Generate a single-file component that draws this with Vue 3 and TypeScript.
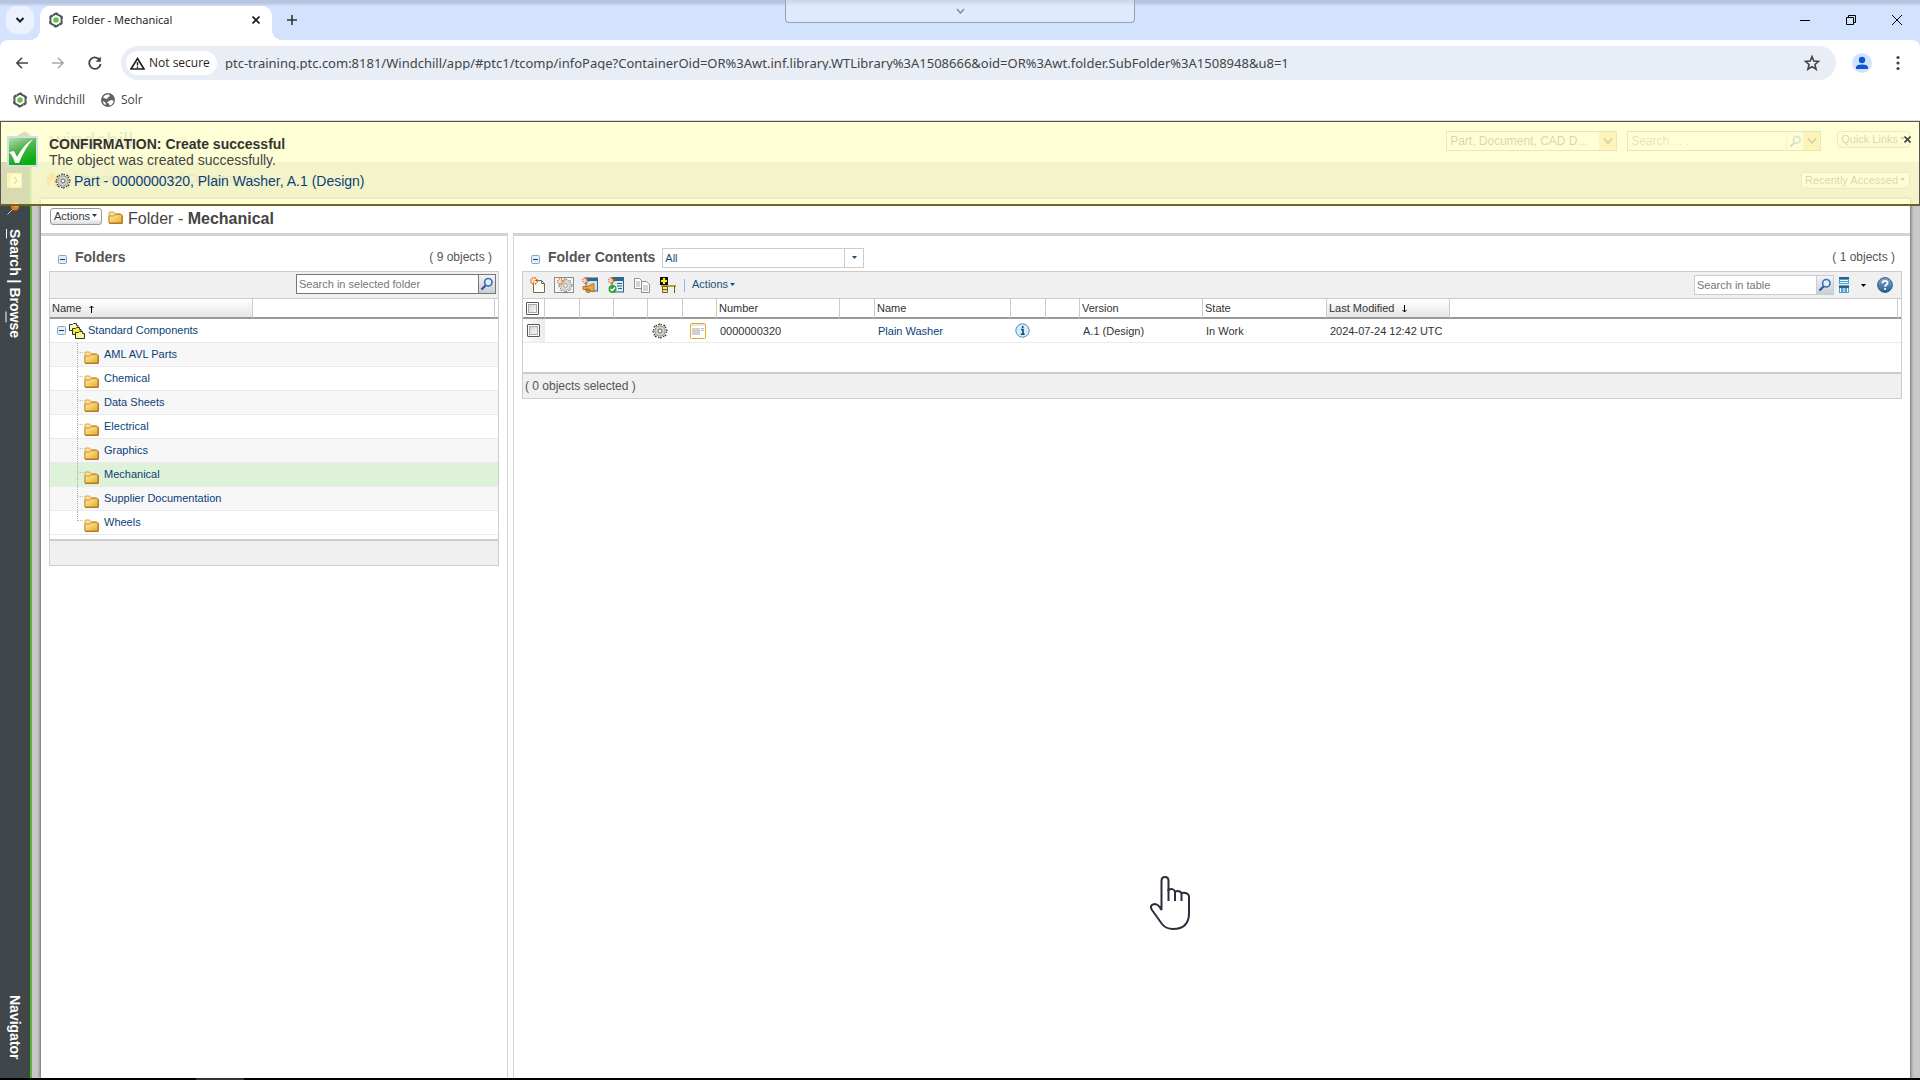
<script setup lang="ts">
import { ref } from 'vue'

const folders: string[] = [
  'AML AVL Parts',
  'Chemical',
  'Data Sheets',
  'Electrical',
  'Graphics',
  'Mechanical',
  'Supplier Documentation',
  'Wheels',
]
const selected = ref('Mechanical')
const columnWidths: number[] = [22, 35, 34, 34, 35, 34, 123, 35, 136, 35, 34, 123, 124, 123]
const petals: number[] = [0, 60, 120, 180, 240, 300]
const teeth: number[] = [0, 45, 90, 135, 180, 225, 270, 315]
const pageUrl =
  'ptc-training.ptc.com:8181/Windchill/app/#ptc1/tcomp/infoPage?ContainerOid=OR%3Awt.inf.library.WTLibrary%3A1508666&oid=OR%3Awt.folder.SubFolder%3A1508948&u8=1'
const url = ref(pageUrl)
</script>

<template>
  <div class="window">
    <svg class="defs" aria-hidden="true">
      <defs>
        <linearGradient id="gold" x1="0" y1="0" x2="1" y2="1">
          <stop offset="0" stop-color="#fdeeb0" />
          <stop offset="1" stop-color="#e8ae1c" />
        </linearGradient>
        <linearGradient id="green" x1="0" y1="0" x2="0.4" y2="1">
          <stop offset="0" stop-color="#b5dfb2" />
          <stop offset="0.5" stop-color="#4db24b" />
          <stop offset="1" stop-color="#06b010" />
        </linearGradient>
        <linearGradient id="blueball" x1="0" y1="0" x2="0" y2="1">
          <stop offset="0" stop-color="#85a9c9" />
          <stop offset="1" stop-color="#235f95" />
        </linearGradient>
        <symbol id="i-logo" viewBox="0 0 16 16">
          <g fill="#4a565b">
            <path v-for="a in petals" :key="a" d="M4.200 2.600 8.200.3l2.400 1.200-.9 2.200-1.900-.9-3 1.700z" :transform="`rotate(${a} 8 8)`" />
          </g>
          <path d="M8 4.900l2.700 1.550v3.100L8 11.100 5.300 9.550v-3.100z" fill="#62c244" />
        </symbol>
        <symbol id="i-folder" viewBox="0 0 15 13">
          <path d="M1 11.500V1.800Q1 1 1.800 1h3.800l1.600 1.700H12q.8 0 .8.8v1h.7v7.400z" fill="#f9e29a" stroke="#d9a43c" />
          <path d="M1 12V5h4.600l1.200-1.400h7V12z" fill="url(#gold)" stroke="#c98a2a" />
          <path d="M1 12.400h13.400V4.500" fill="none" stroke="#9a5a18" stroke-width=".8" />
        </symbol>
        <symbol id="i-gear" viewBox="0 0 16 16">
          <g fill="#d6d9cc" stroke="#222">
            <rect v-for="a in teeth" :key="a" x="6.700" y="1" width="2.600" height="4" stroke-dasharray="1.500 1" :transform="`rotate(${a} 8 8)`" />
          </g>
          <circle cx="8" cy="8" r="5" fill="#d0d3c8" stroke="#8e9388" stroke-width=".6" />
          <circle cx="8" cy="8" r="2" fill="#fff" stroke="#555" stroke-width=".9" />
        </symbol>
        <symbol id="i-spark" viewBox="0 0 8 8">
          <circle cx="4" cy="4" r="3.200" fill="none" stroke="#e9531a" stroke-width="1.400" stroke-dasharray="1.500 1" />
          <circle cx="4" cy="4" r="1.600" fill="#ffd27a" />
        </symbol>
        <symbol id="i-glass" viewBox="0 0 14 14">
          <path d="M1.500 12.500 6 8" stroke="#2a5596" stroke-width="2.200" />
          <circle cx="8.300" cy="5.200" r="3.700" fill="#e4effa" stroke="#3d72b8" stroke-width="1.700" />
        </symbol>
        <symbol id="i-chev" viewBox="0 0 10 8">
          <path d="M1 1.500 5 6l4-4.500" fill="none" stroke="currentColor" stroke-width="2" />
        </symbol>
        <symbol id="i-caret" viewBox="0 0 5 3"><path d="M0 0h5L2.500 3z" fill="currentColor" /></symbol>
        <symbol id="i-minus" viewBox="0 0 9 9">
          <rect x=".5" y=".5" width="8" height="8" rx="1" fill="#e3eef7" stroke="#7fa8c4" />
          <path d="M2 4.500h5" stroke="#1c3f60" />
        </symbol>
      </defs>
    </svg>

    <header class="chrome">
      <div class="tabstrip">
        <button class="tab-search" aria-label="Search tabs">
          <svg width="10" height="8" viewBox="0 0 10 8"><path d="M1.500 2 5 5.500 8.500 2" fill="none" stroke="#1f1f1f" stroke-width="2" /></svg>
        </button>
        <div class="tab">
          <svg width="16" height="16"><use href="#i-logo" /></svg>
          <span class="tab-title">Folder - Mechanical</span>
          <button class="icon-btn" aria-label="Close tab">
            <svg width="8" height="8" viewBox="0 0 8 8"><path d="M.5.5l7 7M7.500.5l-7 7" stroke="#1f1f1f" stroke-width="1.600" /></svg>
          </button>
        </div>
        <button class="icon-btn new-tab" aria-label="New tab">
          <svg width="10" height="10" viewBox="0 0 10 10"><path d="M5 0v10M0 5h10" stroke="#333" stroke-width="1.600" /></svg>
        </button>
        <div class="win-controls">
          <button class="icon-btn" aria-label="Minimize"><svg width="10" height="10" viewBox="0 0 10 10"><path d="M0 5.500h10" stroke="#000" /></svg></button>
          <button class="icon-btn" aria-label="Restore"><svg width="10" height="10" viewBox="0 0 10 10"><path d="M.5 2.500h7v7h-7zM2.500 2.500v-2h7v7h-2" fill="none" stroke="#000" /></svg></button>
          <button class="icon-btn" aria-label="Close"><svg width="10" height="10" viewBox="0 0 10 10"><path d="M0 0l10 10M10 0 0 10" stroke="#000" /></svg></button>
        </div>
      </div>
      <button class="session-tab" aria-label="Show session bar">
        <svg width="9" height="7" viewBox="0 0 9 7"><path d="M1 1l3.500 4L8 1" fill="none" stroke="#8492a8" stroke-width="1.500" /></svg>
      </button>

      <div class="toolbar">
        <button class="icon-btn" aria-label="Back"><svg width="12" height="12" viewBox="0 0 12 12"><path d="M12 6H1M6 .8.8 6 6 11.200" fill="none" stroke="#444" stroke-width="1.600" /></svg></button>
        <button class="icon-btn" aria-label="Forward"><svg width="12" height="12" viewBox="0 0 12 12"><path d="M0 6h11M6 .8 11.200 6 6 11.200" fill="none" stroke="#a9a9a9" stroke-width="1.600" /></svg></button>
        <button class="icon-btn" aria-label="Reload"><svg width="14" height="14" viewBox="0 0 14 14"><path d="M12 4.500A5.700 5.700 0 1 0 12.600 8" fill="none" stroke="#444" stroke-width="1.800" /><path d="M12.800.5v5.200H7.600z" fill="#444" /></svg></button>
        <div class="omnibox">
          <button class="security">
            <svg width="15" height="13" viewBox="0 0 15 13"><path d="M7.500 1.500 14 12H1z" fill="none" stroke="#1f1f1f" stroke-width="1.600" /><path d="M7.500 5v3.500M7.500 9.500V11" stroke="#1f1f1f" stroke-width="1.400" /></svg>
            <span>Not secure</span>
          </button>
          <input v-model="url" class="url" type="text" aria-label="Address" />
          <button class="icon-btn" aria-label="Bookmark this page"><svg width="16" height="16" viewBox="0 0 16 16"><path d="M8 1.600l1.800 4.500 4.800.3-3.700 3.100 1.200 4.700L8 11.600l-4.100 2.600 1.200-4.700L1.400 6.400l4.800-.3z" fill="none" stroke="#444" stroke-width="1.600" /></svg></button>
        </div>
        <button class="avatar" aria-label="Profile"><svg width="14" height="14" viewBox="0 0 14 14"><circle cx="7" cy="4" r="3.200" fill="#0b57d0" /><path d="M1 13v-1.500Q1 8.500 7 8.500t6 3V13z" fill="#0b57d0" /></svg></button>
        <button class="icon-btn" aria-label="Menu"><svg width="4" height="16" viewBox="0 0 4 16"><g fill="#444"><circle cx="2" cy="2.500" r="1.600" /><circle cx="2" cy="8" r="1.600" /><circle cx="2" cy="13.500" r="1.600" /></g></svg></button>
      </div>

      <nav class="bookmarks">
        <a href="#"><svg width="16" height="16"><use href="#i-logo" /></svg>Windchill</a>
        <a href="#"><svg width="14" height="14" viewBox="0 0 14 14"><circle cx="7" cy="7" r="7" fill="#5f6368" /><path d="M2 4.500Q4 6 6.500 5.500 7 3.500 9 3.200L8 1.500Q4 1 2 4.500M7 8.500l3-1.500 2.800.8Q12 12 8.500 12.500L8 10.500 6 10zM1.500 8l3 1.500.5 2.500Q2 11 1.500 8" fill="#fff" /></svg>Solr</a>
      </nav>
    </header>

    <div class="app">
      <div class="masthead">
        <div class="brand">
          <svg width="32" height="32"><use href="#i-logo" /></svg>
          <span class="brand-name">windchill</span>
        </div>
        <div class="combo type">
          <select aria-label="Object type"><option>Part, Document, CAD D...</option></select>
          <button class="orange" aria-label="Types"><svg width="10" height="8"><use href="#i-chev" /></svg></button>
        </div>
        <div class="combo global">
          <input type="text" placeholder="Search . . ." aria-label="Search" />
          <button aria-label="Run search"><svg width="13" height="13"><use href="#i-glass" /></svg></button>
          <button class="orange" aria-label="Search options"><svg width="10" height="8"><use href="#i-chev" /></svg></button>
        </div>
        <button class="grey-btn">Quick Links<svg width="5" height="3"><use href="#i-caret" /></svg></button>
      </div>

      <div class="body">
        <aside class="rail">
          <svg class="rail-open" width="15" height="15" viewBox="0 0 15 15"><path d="M0 0h15v15H0z" fill="#f9c65c" /><path d="M4 1.500h9.500v12H4z" fill="#fff" /><path d="M7 4l3 3.500L7 11" fill="none" stroke="#a36200" stroke-width="1.600" /></svg>
          <svg class="pin" width="13" height="13" viewBox="0 0 13 13"><path d="M.5 12.500 6 7" stroke="#ccc" /><circle cx="8" cy="4.500" r="4" fill="#e07b1c" /><circle cx="9" cy="3" r="2" fill="#f6b772" /></svg>
          <div class="rail-text"><u>S</u>earch | Bro<u>w</u>se</div>
          <div class="rail-text nav">Navigator</div>
        </aside>

        <div class="main">
          <div class="crumbs">
            <svg width="14" height="14" viewBox="0 0 14 14"><path d="M0 7l7-7 7 7h-2v7H8.500V9h-3v5H2V7z" fill="#e58a1a" /></svg>
            <span class="crumb">Libraries &gt; Standard Components</span>
            <button class="grey-btn">Recently Accessed<svg width="5" height="3"><use href="#i-caret" /></svg></button>
          </div>

          <main class="page">
            <div class="titlebar">
              <button class="grey-btn">Actions<svg width="5" height="3"><use href="#i-caret" /></svg></button>
              <svg width="15" height="13"><use href="#i-folder" /></svg>
              <h1><span>Folder - </span>Mechanical</h1>
            </div>

            <div class="panes">
              <section class="pane tree-pane">
                <div class="pane-head">
                  <svg width="9" height="9"><use href="#i-minus" /></svg>
                  <h2>Folders</h2>
                  <span class="count">( 9 objects )</span>
                </div>
                <div class="box">
                  <div class="bar tree-bar">
                    <div class="combo dark">
                      <input type="text" placeholder="Search in selected folder" aria-label="Search in selected folder" />
                      <button class="glass" aria-label="Search folder"><svg width="14" height="14"><use href="#i-glass" /></svg></button>
                    </div>
                  </div>
                  <table>
                    <colgroup><col class="c-name" /><col /><col class="c-end" /></colgroup>
                    <thead>
                      <tr>
                        <th class="sorted">Name<svg class="arrow" width="5" height="8" viewBox="0 0 5 8"><path d="M2.500 8V1M.5 3l2-2 2 2" fill="none" stroke="#000" /></svg></th>
                        <th></th>
                        <th></th>
                      </tr>
                    </thead>
                    <tbody>
                      <tr>
                        <td colspan="3">
                          <div class="node root">
                            <svg width="9" height="9"><use href="#i-minus" /></svg>
                            <svg width="16" height="16" viewBox="0 0 16 16"><g stroke="#333"><path d="M.5 1.500h3l1-1h3v2H9v5H.5z" fill="#fdfbc8" /><path d="M3.500 5.500h3l1-1h3v2h1.500v5H3.500z" fill="#f4ea35" /><path d="M6.500 9.500h3l1-1h3v2h2v5h-9z" fill="#fbf690" /></g></svg>
                            <a href="#">Standard Components</a>
                          </div>
                        </td>
                      </tr>
                      <tr v-for="(name, i) in folders" :key="name" :class="{ alt: i % 2 === 0, on: name === selected }">
                        <td colspan="3">
                          <div class="node" @click="selected = name">
                            <span class="branch" :class="{ last: i === folders.length - 1 }"></span>
                            <svg class="low" width="15" height="13"><use href="#i-folder" /></svg>
                            <a href="#">{{ name }}</a>
                          </div>
                        </td>
                      </tr>
                    </tbody>
                  </table>
                  <div class="foot tree-foot"></div>
                </div>
              </section>

              <section class="pane list-pane">
                <div class="pane-head">
                  <svg width="9" height="9"><use href="#i-minus" /></svg>
                  <h2>Folder Contents</h2>
                  <div class="combo view">
                    <select aria-label="View"><option>All</option></select>
                    <button aria-label="Views"><svg width="5" height="3"><use href="#i-caret" /></svg></button>
                  </div>
                  <span class="count">( 1 objects )</span>
                </div>
                <div class="box">
                  <div class="bar">
                    <div class="tools">
                      <button class="icon-btn" aria-label="New document"><svg width="16" height="16" viewBox="0 0 16 16"><path d="M3.500 3.500h8l3 3v9h-11z" fill="#fffff0" stroke="#6b7060" /><path d="M11.500 3.500v3h3" fill="none" stroke="#6b7060" /><use href="#i-spark" width="8" height="8" /></svg></button>
                      <button class="icon-btn" aria-label="New part"><svg width="20" height="16" viewBox="0 0 20 16"><rect x=".5" y=".5" width="19" height="15" fill="#f7f7f7" stroke="#222" stroke-dasharray="1 1" /><use href="#i-gear" x="4" y="1" width="15" height="15" opacity=".65" /><use href="#i-spark" x="3" y="1" width="7" height="7" /></svg></button>
                      <button class="icon-btn" aria-label="New problem report"><svg width="16" height="16" viewBox="0 0 16 16"><rect x="4" y="1" width="11.500" height="13" fill="#cfe3ef" stroke="#2d678c" /><path d="M4 1h12v3H4z" fill="#2d678c" /><use href="#i-spark" width="7" height="7" /><path d="M1 9.500h4l7-3v8.500l-6-2.500H1zM4 12h2.500l1 3.500H5z" fill="#eaa63c" stroke="#a8630f" stroke-width=".8" /></svg></button>
                      <button class="icon-btn" aria-label="New task"><svg width="16" height="16" viewBox="0 0 16 16"><rect x="4" y=".5" width="11.500" height="14.500" fill="#dcebf4" stroke="#2d678c" /><path d="M4 0h12v4H4zM9 6h5v1H9zM9 8.500h5v1H9zM10 11h4v1h-4z" fill="#2d678c" /><use href="#i-spark" width="7" height="7" /><circle cx="4.500" cy="12" r="4" fill="#35a23b" /><path d="M2.500 12l1.500 1.500 3-3" fill="none" stroke="#fff" stroke-width="1.300" /></svg></button>
                      <button class="icon-btn" aria-label="Copy"><svg width="16" height="16" viewBox="0 0 16 16"><g fill="#fff" stroke="#8b8f85"><path d="M.5 1.500h5l3 3v7h-8z" /><path d="M7.500 4.500h5l3 3v8h-8z" /></g><path d="M2 5h4M2 7h4M2 9h4M9 9h5M9 11h5M9 13h5" stroke="#aaa" /></svg></button>
                      <button class="icon-btn" aria-label="Add to workspace"><svg width="16" height="16" viewBox="0 0 16 16"><path d="M0 0h8v8H0z" fill="#111" /><path d="M4 1v6M1 4h6" stroke="#ffee20" stroke-width="2.200" /><path d="M1 8h15v2H1z" fill="#b5a23c" /><path d="M2.500 9.500h5v6h-5zM14.500 9v7" fill="#f2e28a" stroke="#6d601c" /><path d="M3 12.500h4" stroke="#6d601c" /></svg></button>
                      <span class="sep"></span>
                      <button class="text-btn">Actions<svg width="5" height="3"><use href="#i-caret" /></svg></button>
                    </div>
                    <div class="bar-right">
                      <div class="combo light">
                        <input type="text" placeholder="Search in table" aria-label="Search in table" />
                        <button class="glass" aria-label="Search table"><svg width="14" height="14"><use href="#i-glass" /></svg></button>
                      </div>
                      <button class="icon-btn grid-btn" aria-label="Table view"><svg width="10" height="16" viewBox="0 0 10 16"><path d="M0 0h10v7H0zM0 8h10v8H0z" fill="#4ba3d3" /><path d="M0 0h10v2H0zM0 9h10v2H0z" fill="#35607f" /><path d="M1 3.500h8M1 5.500h8M1.500 11v4M5 11v4M8.500 11v4" stroke="#fff" /></svg></button>
                      <button class="icon-btn dark-caret" aria-label="View options"><svg width="5" height="3"><use href="#i-caret" /></svg></button>
                      <button class="icon-btn help" aria-label="Help"><svg width="16" height="16" viewBox="0 0 16 16"><circle cx="8" cy="8" r="7.400" fill="url(#blueball)" stroke="#2f5f8c" /><path d="M5.500 6.200Q5.500 3.800 8 3.800t2.500 2.100Q10.500 7.200 9.200 8 8 8.800 8 9.800M8 11v1.800" fill="none" stroke="#fff" stroke-width="1.800" /></svg></button>
                    </div>
                  </div>
                  <table>
                    <colgroup>
                      <col v-for="(w, i) in columnWidths" :key="i" :style="{ width: w + 'px' }" />
                      <col /><col class="c-end" />
                    </colgroup>
                    <thead>
                      <tr>
                        <th class="check"><input type="checkbox" aria-label="Select all" /></th>
                        <th></th><th></th><th></th><th></th><th></th>
                        <th>Number</th>
                        <th></th>
                        <th>Name</th>
                        <th></th><th></th>
                        <th>Version</th>
                        <th>State</th>
                        <th class="sorted">Last Modified<svg class="arrow" width="5" height="8" viewBox="0 0 5 8"><path d="M2.500 0v7M.5 5l2 2 2-2" fill="none" stroke="#000" /></svg></th>
                        <th></th><th></th>
                      </tr>
                    </thead>
                    <tbody>
                      <tr>
                        <td class="check shade"><input type="checkbox" aria-label="Select Plain Washer" /></td>
                        <td></td><td></td><td></td>
                        <td class="icon-cell"><svg width="16" height="16"><use href="#i-gear" /></svg></td>
                        <td class="state-cell"><svg width="16" height="16" viewBox="0 0 16 16"><rect x=".5" y=".5" width="15" height="15" rx="1" fill="#fff" stroke="#e9a820" /><path d="M1 1h14v2H1z" fill="#e4e6ea" /><path d="M2 5h8v7H2z" fill="#cfd0d2" /><path d="M11 5.500h3M11 7.500h3" stroke="#bbb" /></svg></td>
                        <td>0000000320</td>
                        <td></td>
                        <td><a href="#">Plain Washer</a></td>
                        <td class="icon-cell"><svg width="15" height="15" viewBox="0 0 15 15"><circle cx="7.500" cy="7.500" r="6.700" fill="#d5ecfa" stroke="#4f8fbd" /><path d="M7.700 3v2M6 6.500h2V11M5.700 11.300h4" fill="none" stroke="#14486f" stroke-width="1.600" /></svg></td>
                        <td></td>
                        <td>A.1 (Design)</td>
                        <td>In Work</td>
                        <td>2024-07-24 12:42 UTC</td>
                        <td></td><td></td>
                      </tr>
                    </tbody>
                  </table>
                  <div class="spacer"></div>
                  <div class="foot">( 0 objects selected )</div>
                </div>
              </section>
            </div>
          </main>
        </div>
      </div>

      <div class="banner" role="status">
        <svg class="ok" width="31" height="31" viewBox="0 0 31 31"><path d="M0 0h31v31H0z" fill="#d3dfe6" /><path d="M2 2h27v27H2z" fill="url(#green)" /><path d="M2 16l5-1 3 6Q17 8 26 3q-8 9-14 24H8Q6 20 2 16" fill="#fff" /></svg>
        <div class="msg">
          <strong>CONFIRMATION: Create successful</strong>
          <span>The object was created successfully.</span>
          <div class="msg-link"><svg width="16" height="16"><use href="#i-gear" /></svg><a href="#">Part - 0000000320, Plain Washer, A.1 (Design)</a></div>
        </div>
        <button class="icon-btn" aria-label="Dismiss"><svg width="7" height="7" viewBox="0 0 7 7"><path d="M.5.5l6 6M6.500.5l-6 6" stroke="#444" stroke-width="1.600" /></svg></button>
      </div>
    </div>

    <footer class="taskbar"><span></span></footer>

    <svg class="hand" width="42" height="54" viewBox="0 0 42 54">
      <path d="M12.500 34V5Q12.500 1 16 1t3.500 4v9Q24 11.500 26 15.500q4.500-1.500 6.500 1.500 6-1 7.500 3V37q0 16-16 16-7 0-11-5L3 34q-3-5 2.500-6 4 0 7 6z" fill="#fff" stroke="#2d2d3d" stroke-width="2" />
      <path d="M19.500 13v12M26 15v10M32.500 17v8" stroke="#2d2d3d" stroke-width="2" />
    </svg>
  </div>
</template>

<style>
body { background: #fff; }
</style>

<style scoped>
* { box-sizing: border-box; }
.window {
  position: relative;
  display: flex;
  flex-direction: column;
  min-height: 100vh;
  font: 11px/14px "Liberation Sans", Arial, sans-serif;
  color: #333;
}
.defs { position: absolute; width: 0; height: 0; }
svg { flex: none; display: block; }
button { font: inherit; color: inherit; cursor: pointer; }
input, select { font: inherit; color: inherit; min-width: 0; }
a { color: #0b3f78; text-decoration: none; }
h1, h2 { margin: 0; }
.icon-btn { display: flex; align-items: center; justify-content: center; padding: 0; border: 0; background: none; }

.chrome { position: relative; font-family: "Open Sans", "Noto Sans", sans-serif; font-size: 12px; color: #1f1f1f; border-bottom: 1px solid #dcdcdc; background: #d3e3fd; }
.tabstrip { display: flex; align-items: center; height: 40px; padding: 6px 18px 0 6px; background: linear-gradient(#b7c6e0 0, #b7c6e0 3px, #d3e3fd 6px); }
.tab-search { display: flex; align-items: center; justify-content: center; width: 28px; height: 28px; margin: 0 6px 6px 0; padding: 0; border: 0; border-radius: 10px; background: #ebf2fe; }
.tab { position: relative; display: flex; align-items: center; gap: 8px; width: 232px; height: 34px; padding: 0 12px 6px 8px; border-radius: 10px 10px 0 0; background: #fff; }
.tab::before, .tab::after { content: ""; position: absolute; bottom: 0; width: 10px; height: 10px; }
.tab::before { left: -10px; background: radial-gradient(circle at 0 0, transparent 10px, #fff 10px); }
.tab::after { right: -10px; background: radial-gradient(circle at 100% 0, transparent 10px, #fff 10px); }
.tab-title { flex: 1; font-family: "Noto Sans", sans-serif; font-size: 11px; white-space: nowrap; }
.new-tab { width: 20px; height: 20px; margin: 0 0 6px 10px; }
.win-controls { display: flex; gap: 36px; margin: 0 0 6px auto; }
.session-tab { position: absolute; top: 0; left: 50%; width: 350px; height: 23px; margin-left: -175px; display: flex; align-items: center; justify-content: center; padding: 0; border: 1px solid #94a3ba; border-top: 0; border-radius: 0 0 4px 4px; background: linear-gradient(#c8d6e8, #dfeafc 6px); }
.toolbar { display: flex; align-items: center; height: 46px; padding: 0 20px 0 16px; border-radius: 8px 8px 0 0; background: #fff; }
.toolbar > .icon-btn { margin-right: 24px; }
.toolbar > .icon-btn:nth-child(3) { margin-right: 19px; }
.toolbar > .icon-btn:last-child { margin: 0; }
.omnibox { display: flex; align-items: center; flex: 1; height: 34px; padding: 0 16px 0 5px; border-radius: 17px; background: #e9eef6; }
.security { display: flex; align-items: center; gap: 4px; width: 91px; height: 24px; padding: 0 4px; border: 0; border-radius: 12px; background: #fff; white-space: nowrap; font-size: 12px; }
.url { flex: 1; margin-left: 8px; padding: 0; border: 0; background: none; outline: 0; font-family: "Noto Sans", sans-serif; font-size: 13px; color: #444; }
.avatar { display: flex; align-items: center; justify-content: center; width: 20px; height: 20px; margin: 0 24px 0 16px; padding: 0; border: 0; border-radius: 50%; background: #d3e3fd; }
.bookmarks { display: flex; gap: 16px; height: 34px; padding: 0 12px; background: #fff; }
.bookmarks a { display: flex; align-items: center; gap: 6px; height: 28px; color: #444; }

.app { position: relative; flex: 1; display: flex; flex-direction: column; }
.masthead { display: flex; align-items: flex-start; height: 41px; padding: 10px 10px 0 8px; background: #fff; }
.brand { display: flex; align-items: flex-start; flex: 1; gap: 10px; color: #8a9296; }
.brand-name { font-size: 22px; line-height: 20px; }
.combo { display: flex; height: 20px; border: 1px solid #ccc; background: #fff; }
.combo input, .combo select { flex: 1; padding: 0 2px; border: 0; outline: 0; background: none; appearance: none; }
.combo input::placeholder { color: #777; opacity: 1; }
.combo button { display: flex; align-items: center; justify-content: center; width: 17px; padding: 0; border: 0; border-left: 1px solid #ccc; background: none; }
.masthead .combo { border-color: #888; font-size: 12px; }
.masthead .combo select, .masthead .combo input { padding: 0 3px; }
.combo .orange { background: #fbc268; }
.type { width: 171px; margin-right: 10px; }
.global { width: 194px; margin-right: 16px; }
.dark { width: 200px; border-color: #777; }
.dark .glass, .light .glass { background: linear-gradient(#f4f4f4, #c9cdd6); }
.dark button { border-color: #777; }
.light { width: 140px; }
.grey-btn { display: flex; align-items: center; gap: 2px; height: 17px; padding: 0 4px 2px 3px; border: 1px solid #999; border-radius: 3px; background: linear-gradient(#fff 60%, #d9dadd); white-space: nowrap; }

.body { flex: 1; display: flex; }
.rail { display: flex; flex-direction: column; align-items: center; width: 32px; padding: 11px 0 18px; border-right: 2px solid #5bb53b; background: #3f474a; }
.rail-open { margin-right: 2px; }
.pin { margin: 14px 4px 14px 0; }
.rail-text { writing-mode: vertical-rl; font-size: 14px; line-height: 18px; font-weight: bold; color: #fff; }
.rail-text u { text-underline-position: left; }
.nav { margin-top: auto; }
.main { flex: 1; min-width: 0; display: flex; flex-direction: column; padding: 0 10px 0 9px; background: #c7c8c8; }
.crumbs { display: flex; align-items: flex-start; gap: 16px; height: 37px; padding: 10px 0 0 4px; }
.crumb { flex: 1; font-size: 12px; color: #777; }
.page { flex: 1; display: flex; flex-direction: column; background: #fff; box-shadow: 0 0 3px 1px #666; clip-path: inset(-4px -4px 0 -4px); }
.titlebar { display: flex; align-items: center; height: 34px; padding: 1px 9px 0; font-size: 11px; }
.titlebar > svg { margin: 2px 5px 0 6px; }
h1 { font-size: 16px; line-height: 20px; color: #444; padding-top: 4px; }
h1 span { font-weight: normal; white-space: pre; }

.panes { flex: 1; display: flex; gap: 5px; }
.pane { border-top: 3px solid #d2d4d4; }
.tree-pane { flex: 0 0 467px; padding: 0 8px; border-right: 1px solid #d2d4d4; }
.list-pane { flex: 1; min-width: 0; padding: 0 8px; border-left: 1px solid #d2d4d4; }
.pane-head { display: flex; align-items: center; height: 35px; padding: 7px 7px 0 9px; font-size: 12px; color: #555; }
.pane-head h2 { margin-left: 8px; font-size: 14px; line-height: 18px; }
.pane-head > svg { margin-top: 4px; }
.count { margin-left: auto; }
.view { width: 202px; margin: 1px 0 0 7px; font-size: 11px; color: #1c4f78; }
.combo.view button { width: 19px; }

.box { border: 1px solid #ccc; }
.bar { display: flex; align-items: center; justify-content: space-between; height: 27px; padding: 0 8px 0 7px; background: #f0f0f0; border-bottom: 1px solid #ccc; }
.tree-bar { justify-content: flex-end; padding: 0 2px 2px; }
.tools, .bar-right { display: flex; align-items: center; }
.tools .icon-btn { margin-right: 10px; }
.tools .icon-btn:nth-child(2) { margin: 0 8px 0 -2px; }
.tools .icon-btn:nth-child(6) { margin-right: 8px; }
.sep { width: 1px; height: 13px; margin-right: 7px; background: #8fb8e0; }
.text-btn { display: flex; align-items: center; gap: 2px; padding: 0 0 2px; border: 0; background: none; color: #1c4f78; }
.grid-btn { margin: 0 12px 0 5px; }
.dark-caret { color: #000; }
.help { margin-left: 11px; }

table { width: 100%; border-collapse: separate; border-spacing: 0; table-layout: fixed; }
.c-name { width: 203px; }
.c-end { width: 3px; }
th { height: 20px; padding: 0 2px; border-right: 1px solid #ccc; border-bottom: 2px solid #999; font-weight: normal; text-align: left; white-space: nowrap; vertical-align: middle; }
th:last-child { border-right: 0; padding: 0; }
.sorted { background: linear-gradient(#fff, #e6e6e6); }
.arrow { display: inline-block; margin-left: 8px; vertical-align: -1px; }
td { height: 24px; padding: 0 3px; border-bottom: 1px solid #eaeaea; white-space: nowrap; }
.check { padding: 0 0 0 3px; }
td.check, td.icon-cell { padding-left: 4px; }
.shade { background: linear-gradient(90deg, #fff, #ebebef); }
.check input { display: block; appearance: none; width: 13px; height: 13px; margin: 0; border: 1px solid #555; border-radius: 1px; background: linear-gradient(135deg, #ccc, #fff); box-shadow: inset 0 0 0 1px #fff, inset 0 0 0 2px #aaa; }
.state-cell { padding-left: 7px; }
.alt td { background: #f7f7f7; }
.on td { background: #def2d9; }
tbody td[colspan] { padding: 0; }
.node { display: flex; align-items: center; height: 23px; padding-left: 27px; }
.node a { padding-bottom: 1px; }
.root { padding-left: 7px; gap: 3px; }
.branch { align-self: stretch; width: 7px; border-left: 1px dotted #aaa; background: linear-gradient(90deg, #bbb 50%, transparent 50%) 0 9px / 2px 1px repeat-x; }
.branch.last { height: 10px; align-self: flex-start; }
.low { margin: 5px 5px 0 0; }
.spacer { height: 29px; }
.foot { height: 26px; padding: 5px 2px; border-top: 2px solid #ccc; background: #f0f0f0; font-size: 12px; color: #555; }
.tree-foot { margin-top: 4px; }

.banner { position: absolute; top: 0; left: 0; right: 0; display: flex; align-items: flex-start; height: 85px; padding: 14px 8px 0 6px; border: 1px solid #555; border-bottom: 2px solid #6f6420; background: rgba(255, 255, 204, 0.8); font-size: 14px; line-height: 16px; }
.msg { flex: 1; display: flex; flex-direction: column; margin-left: 11px; color: #444; }
.msg strong { color: #333; }
.msg-link { display: flex; align-items: center; gap: 3px; margin: 5px 0 0 6px; }

.taskbar { height: 2px; background: #000; }
.taskbar span { display: block; width: 48px; height: 2px; margin-left: 196px; background: #333; }
.hand { position: absolute; left: 1149px; top: 876px; }
</style>
